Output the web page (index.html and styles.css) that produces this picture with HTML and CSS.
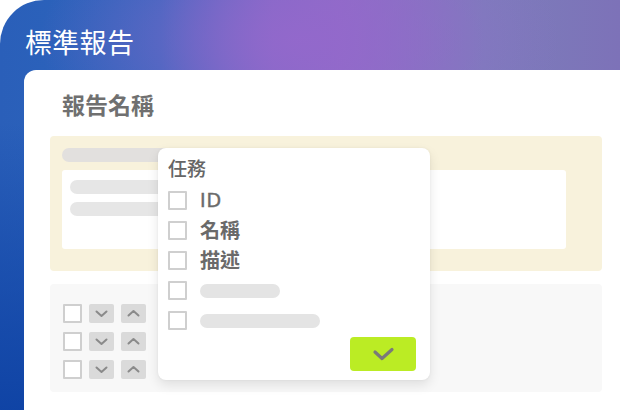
FILE: index.html
```html
<!DOCTYPE html>
<html lang="zh-Hant">
<head>
<meta charset="utf-8">
<link rel="stylesheet" href="styles.css">
</head>
<body>
<div class="stage">
  <h1 class="title">標準報告</h1>
  <div class="card">
    <h2 class="heading">報告名稱</h2>
    <div class="yellow">
      <div class="bar bar-top"></div>
      <div class="inner">
        <div class="bar bar-a"></div>
        <div class="bar bar-b"></div>
      </div>
    </div>
    <div class="greypanel">
      <div class="ctrl-row">
        <span class="box"></span>
        <span class="btn"><svg viewBox="0 0 25 19" width="25" height="19"><path d="M7.5 7.5 L12.5 12 L17.5 7.5" fill="none" stroke="#8a8a8a" stroke-width="2" stroke-linecap="round" stroke-linejoin="round"/></svg></span>
        <span class="btn"><svg viewBox="0 0 25 19" width="25" height="19"><path d="M7.5 11.5 L12.5 7 L17.5 11.5" fill="none" stroke="#8a8a8a" stroke-width="2" stroke-linecap="round" stroke-linejoin="round"/></svg></span>
      </div>
      <div class="ctrl-row">
        <span class="box"></span>
        <span class="btn"><svg viewBox="0 0 25 19" width="25" height="19"><path d="M7.5 7.5 L12.5 12 L17.5 7.5" fill="none" stroke="#8a8a8a" stroke-width="2" stroke-linecap="round" stroke-linejoin="round"/></svg></span>
        <span class="btn"><svg viewBox="0 0 25 19" width="25" height="19"><path d="M7.5 11.5 L12.5 7 L17.5 11.5" fill="none" stroke="#8a8a8a" stroke-width="2" stroke-linecap="round" stroke-linejoin="round"/></svg></span>
      </div>
      <div class="ctrl-row">
        <span class="box"></span>
        <span class="btn"><svg viewBox="0 0 25 19" width="25" height="19"><path d="M7.5 7.5 L12.5 12 L17.5 7.5" fill="none" stroke="#8a8a8a" stroke-width="2" stroke-linecap="round" stroke-linejoin="round"/></svg></span>
        <span class="btn"><svg viewBox="0 0 25 19" width="25" height="19"><path d="M7.5 11.5 L12.5 7 L17.5 11.5" fill="none" stroke="#8a8a8a" stroke-width="2" stroke-linecap="round" stroke-linejoin="round"/></svg></span>
      </div>
    </div>

    <div class="popup">
      <div class="popup-title">任務</div>
      <div class="opt"><span class="box"></span><span class="label latin">ID</span></div>
      <div class="opt"><span class="box"></span><span class="label">名稱</span></div>
      <div class="opt"><span class="box"></span><span class="label">描述</span></div>
      <div class="opt"><span class="box"></span><span class="pill pill-s"></span></div>
      <div class="opt"><span class="box"></span><span class="pill pill-l"></span></div>
      <div class="popup-foot">
        <span class="ok"><svg viewBox="0 0 66 34" width="66" height="34"><path d="M25 15 L32 21.5 L42 12.5" fill="none" stroke="#7a7a7a" stroke-width="3.2" stroke-linecap="round" stroke-linejoin="round"/></svg></span>
      </div>
    </div>
  </div>
</div>
</body>
</html>
```

FILE: styles.css
```css
* { box-sizing: border-box; }
html, body { margin: 0; padding: 0; background: #ffffff; }
body {
  width: 620px;
  height: 410px;
  overflow: hidden;
  font-family: "Noto Sans CJK TC", "Noto Sans", sans-serif;
}
.stage {
  width: 620px;
  height: 410px;
  border-top-left-radius: 44px;
  background:
    linear-gradient(180deg, rgba(16,70,168,0) 30%, rgba(16,68,166,0.55) 65%, rgba(14,66,164,0.95) 100%),
    linear-gradient(155deg, rgba(255,255,255,0) 62%, rgba(255,255,255,0.06) 62.5%, rgba(255,255,255,0) 80%),
    radial-gradient(ellipse 260px 140px at 300px 40px, rgba(148,104,204,0.9), rgba(148,104,204,0) 100%),
    linear-gradient(90deg, #2a5fb9 0%, #2d66bd 26%, #7f6ac6 44%, #8e6cc6 55%, #7c7dbb 78%, #7d72b8 100%);
  display: flex;
  flex-direction: column;
  padding: 24px 0 0 24px;
}
.title {
  margin: 0 0 0 1px;
  font-weight: 400;
  font-size: 27px;
  line-height: 36px;
  height: 46px;
  color: #ffffff;
  letter-spacing: 0.3px;
}
.card {
  flex: 1;
  background: #ffffff;
  border-top-left-radius: 12px;
  padding: 18px 18px 0 26px;
  position: relative;
}
.heading {
  margin: 0 0 0 12px;
  font-size: 23px;
  line-height: 32px;
  height: 48px;
  font-weight: 700;
  color: #707070;
}
.yellow {
  background: #f8f2dc;
  border-radius: 4px;
  padding: 12px 36px 22px 12px;
  height: 135px;
}
.bar {
  background: #e2e0de;
  border-radius: 7px;
  height: 14px;
}
.bar-top { width: 110px; margin-bottom: 8px; }
.inner {
  background: #ffffff;
  border-radius: 3px;
  height: 79px;
  padding: 10px 8px;
  display: flex;
  flex-direction: column;
  gap: 8px;
}
.inner .bar { background: #e6e6e6; width: 110px; height: 14px; }
.greypanel {
  margin-top: 13px;
  background: #f8f8f8;
  border-radius: 4px;
  height: 108px;
  padding: 20px 13px;
  display: flex;
  flex-direction: column;
  gap: 10px;
}
.ctrl-row {
  display: flex;
  gap: 7px;
  align-items: center;
  height: 18px;
}
.box {
  width: 19px;
  height: 19px;
  border: 2px solid #cfcfcf;
  background: #ffffff;
  border-radius: 1px;
  flex: none;
}
.btn {
  width: 25px;
  height: 19px;
  background: #dadada;
  border-radius: 2px;
  display: flex;
}
.popup {
  position: absolute;
  left: 134px;
  top: 78px;
  width: 272px;
  height: 232px;
  background: #ffffff;
  border-radius: 8px;
  box-shadow: 0 5px 12px rgba(0,0,0,0.10), 0 0 3px rgba(0,0,0,0.05);
  padding: 6px 10px 0 10px;
}
.popup-title {
  font-size: 19px;
  line-height: 28px;
  font-weight: 500;
  color: #666666;
  margin-bottom: 9px;
}
.opt {
  display: flex;
  align-items: center;
  height: 19px;
  margin-bottom: 11px;
  gap: 13px;
}
.label {
  font-size: 20px;
  font-weight: 700;
  color: #6a6a6a;
  line-height: 19px;
  margin-top: -3px;
}
.label.latin {
  font-family: "DejaVu Sans", "Noto Sans CJK TC", sans-serif;
  font-weight: 400;
  font-size: 19px;
  letter-spacing: 1px;
  margin-top: 0;
  -webkit-text-stroke: 0.4px #6a6a6a;
}
.pill {
  height: 14px;
  border-radius: 7px;
  background: #e4e4e4;
}
.pill-s { width: 80px; }
.pill-l { width: 120px; }
.popup-foot {
  display: flex;
  justify-content: flex-end;
  padding-right: 4px;
  margin-top: -4px;
}
.ok {
  width: 66px;
  height: 34px;
  background: #bbec24;
  border-radius: 4px;
  display: flex;
}
```
